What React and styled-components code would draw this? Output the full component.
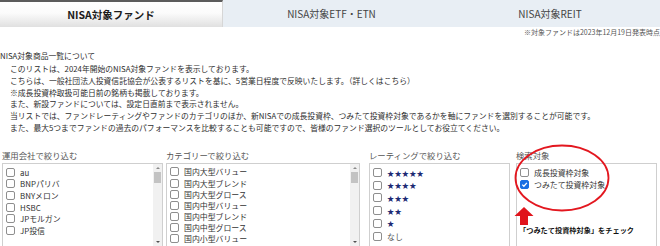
import React from "react";
import styled, { createGlobalStyle } from "styled-components";

const GlobalStyle = createGlobalStyle`
  html, body {
    margin: 0;
    padding: 0;
    background: #fff;
  }
  body {
    width: 660px;
    height: 246px;
    overflow: hidden;
    font-family: "Noto Sans CJK JP", "Noto Sans", sans-serif;
    color: #333;
  }
`;

const tabs = ["NISA対象ファンド", "NISA対象ETF・ETN", "NISA対象REIT"];

const intro = [
  "このリストは、2024年開始のNISA対象ファンドを表示しております。",
  "こちらは、一般社団法人投資信託協会が公表するリストを基に、5営業日程度で反映いたします。（詳しくはこちら）",
  "※成長投資枠取扱可能日前の銘柄も掲載しております。",
  "また、新設ファンドについては、設定日直前まで表示されません。",
  "当リストでは、ファンドレーティングやファンドのカテゴリのほか、新NISAでの成長投資枠、つみたて投資枠対象であるかを軸にファンドを選別することが可能です。",
  "また、最大5つまでファンドの過去のパフォーマンスを比較することも可能ですので、皆様のファンド選択のツールとしてお役立てください。",
];

const companies = ["au", "BNPパリバ", "BNYメロン", "HSBC", "JPモルガン", "JP投信"];
const categories = [
  "国内大型バリュー",
  "国内大型ブレンド",
  "国内大型グロース",
  "国内中型バリュー",
  "国内中型ブレンド",
  "国内中型グロース",
  "国内小型バリュー",
];
const ratings = ["★★★★★", "★★★★", "★★★", "★★", "★", "なし"];

function App() {
  return (
    <>
      <GlobalStyle />
      <TabBar>
        {tabs.map((t, i) => (
          <Tab key={t} $active={i === 0}>
            {t}
          </Tab>
        ))}
      </TabBar>
      <Note>※対象ファンドは2023年12月19日発表時点</Note>

      <Intro>
        <IntroTitle>NISA対象商品一覧について</IntroTitle>
        <IntroBody>
          {intro.map((line) => (
            <p key={line}>{line}</p>
          ))}
        </IntroBody>
      </Intro>

      <Filters>
        <Column $left={2} $width={161}>
          <Label>運用会社で絞り込む</Label>
          <Box>
            <List $pad={2}>
              {companies.map((c) => (
                <Item key={c} $row={11.7}>
                  <Check />
                  <span>{c}</span>
                </Item>
              ))}
            </List>
            <ScrollBar />
          </Box>
        </Column>

        <Column $left={3} $width={194}>
          <Label>カテゴリーで絞り込む</Label>
          <Box>
            <List $pad={2}>
              {categories.map((c) => (
                <Item key={c} $row={11.2}>
                  <Check />
                  <span>{c}</span>
                </Item>
              ))}
            </List>
            <ScrollBar />
          </Box>
        </Column>

        <Column $left={9} $width={141}>
          <Label>レーティングで絞り込む</Label>
          <Box>
            <List $pad={2}>
              {ratings.map((r) => (
                <Item key={r} $row={12.7}>
                  <Check />
                  {r === "なし" ? <None>{r}</None> : <Stars>{r}</Stars>}
                </Item>
              ))}
            </List>
          </Box>
        </Column>

        <Column $left={6} $width={141}>
          <Label>検索対象</Label>
          <Box>
            <List $pad={2}>
              <Item $row={12}>
                <Check />
                <span>成長投資枠対象</span>
              </Item>
              <Item $row={12}>
                <Check $checked />
                <span>つみたて投資枠対象</span>
              </Item>
              <Caption>「つみたて投資枠対象」をチェック</Caption>
            </List>
          </Box>
          <Annotation width="100" height="90" viewBox="0 0 100 90">
            <ellipse cx="49" cy="35" rx="46.5" ry="32.5" fill="none" stroke="#e3171f" strokeWidth="1.8" />
            <path d="M11 64 L20.5 73 L15 73 L15 82 L7 82 L7 73 L1.5 73 Z" fill="#e0141c" />
          </Annotation>
        </Column>
      </Filters>
    </>
  );
}

function Check({ $checked }) {
  return (
    <CheckBox $checked={$checked}>
      {$checked && (
        <svg width="7" height="7" viewBox="0 0 10 10">
          <path d="M1.8 5.2 L4.1 7.5 L8.4 2.6" fill="none" stroke="#fff" strokeWidth="1.8" />
        </svg>
      )}
    </CheckBox>
  );
}

function ScrollBar() {
  return (
    <Scroll>
      <Arrow $up />
      <Thumb />
      <Track />
      <Arrow />
    </Scroll>
  );
}

const TabBar = styled.div`
  display: grid;
  grid-template-columns: 223px 217px 220px;
  height: 27px;
`;

const Tab = styled.div`
  display: flex;
  align-items: center;
  justify-content: center;
  box-sizing: border-box;
  font-size: ${(p) => (p.$active ? "10.5px" : "10px")};
  font-weight: ${(p) => (p.$active ? 700 : 400)};
  color: ${(p) => (p.$active ? "#1c1c1c" : "#444")};
  background: ${(p) =>
    p.$active ? "linear-gradient(#ffffff, #fbfbfb 45%, #e0e0e0)" : "#e8eef4"};
  border-top: ${(p) => (p.$active ? "2px solid #5c5c5c" : "none")};
  border-right: ${(p) => (p.$active ? "1px solid #d6d6d6" : "none")};
`;

const Note = styled.div`
  text-align: right;
  font-size: 7px;
  line-height: 10px;
  color: #555;
`;

const Intro = styled.div`
  margin-top: 12.7px;
  font-size: 7.8px;
  color: #2e2e2e;
`;

const IntroTitle = styled.div`
  line-height: 12px;
  white-space: nowrap;
`;

const IntroBody = styled.div`
  margin-top: 1.4px;
  padding-left: 10px;
  p {
    margin: 0;
    line-height: 11.8px;
    white-space: nowrap;
  }
`;

const Filters = styled.div`
  display: flex;
  margin-top: 15.4px;
`;

const Column = styled.div`
  position: relative;
  flex: 0 0 ${(p) => p.$width}px;
  margin-left: ${(p) => p.$left}px;
`;

const Label = styled.div`
  font-size: 8.4px;
  line-height: 12px;
  color: #555;
  margin-bottom: 2px;
  white-space: nowrap;
`;

const Box = styled.div`
  display: flex;
  height: 84px;
  box-sizing: border-box;
  border: 1px solid #cfcfcf;
  background: #fff;
  overflow: hidden;
`;

const List = styled.div`
  flex: 1;
  padding: ${(p) => p.$pad}px 0 0 2px;
  overflow: hidden;
`;

const Item = styled.div`
  display: flex;
  align-items: center;
  gap: 5px;
  height: ${(p) => p.$row}px;
  font-size: 7.9px;
  color: #333;
  white-space: nowrap;
`;

const CheckBox = styled.span`
  display: inline-flex;
  align-items: center;
  justify-content: center;
  flex: 0 0 auto;
  width: 9px;
  height: 9px;
  box-sizing: border-box;
  margin-left: 1px;
  border-radius: 2px;
  border: 1px solid ${(p) => (p.$checked ? "#1a6fe3" : "#8e8e8e")};
  background: ${(p) => (p.$checked ? "#1a6fe3" : "#fff")};
`;

const Stars = styled.span`
  font-size: 7.2px;
  letter-spacing: 0.2px;
  color: #1c2a74;
`;

const None = styled.span`
  color: #555;
`;

const Caption = styled.div`
  margin-top: 35px;
  font-size: 7.2px;
  line-height: 10px;
  font-weight: 700;
  color: #111;
  white-space: nowrap;
`;

const Scroll = styled.div`
  display: flex;
  flex-direction: column;
  align-items: center;
  width: 9px;
  background: #f1f1f1;
`;

const Arrow = styled.span`
  margin: 3px 0;
  width: 0;
  height: 0;
  border-left: 2px solid transparent;
  border-right: 2px solid transparent;
  ${(p) =>
    p.$up ? "border-bottom: 2.5px solid #8a8a8a;" : "border-top: 2.5px solid #505050;"}
`;

const Thumb = styled.div`
  width: 7px;
  height: 11px;
  background: #c3c3c3;
`;

const Track = styled.div`
  flex: 1;
`;

const Annotation = styled.svg`
  position: absolute;
  left: -3px;
  top: -6px;
  pointer-events: none;
`;

export default App;
